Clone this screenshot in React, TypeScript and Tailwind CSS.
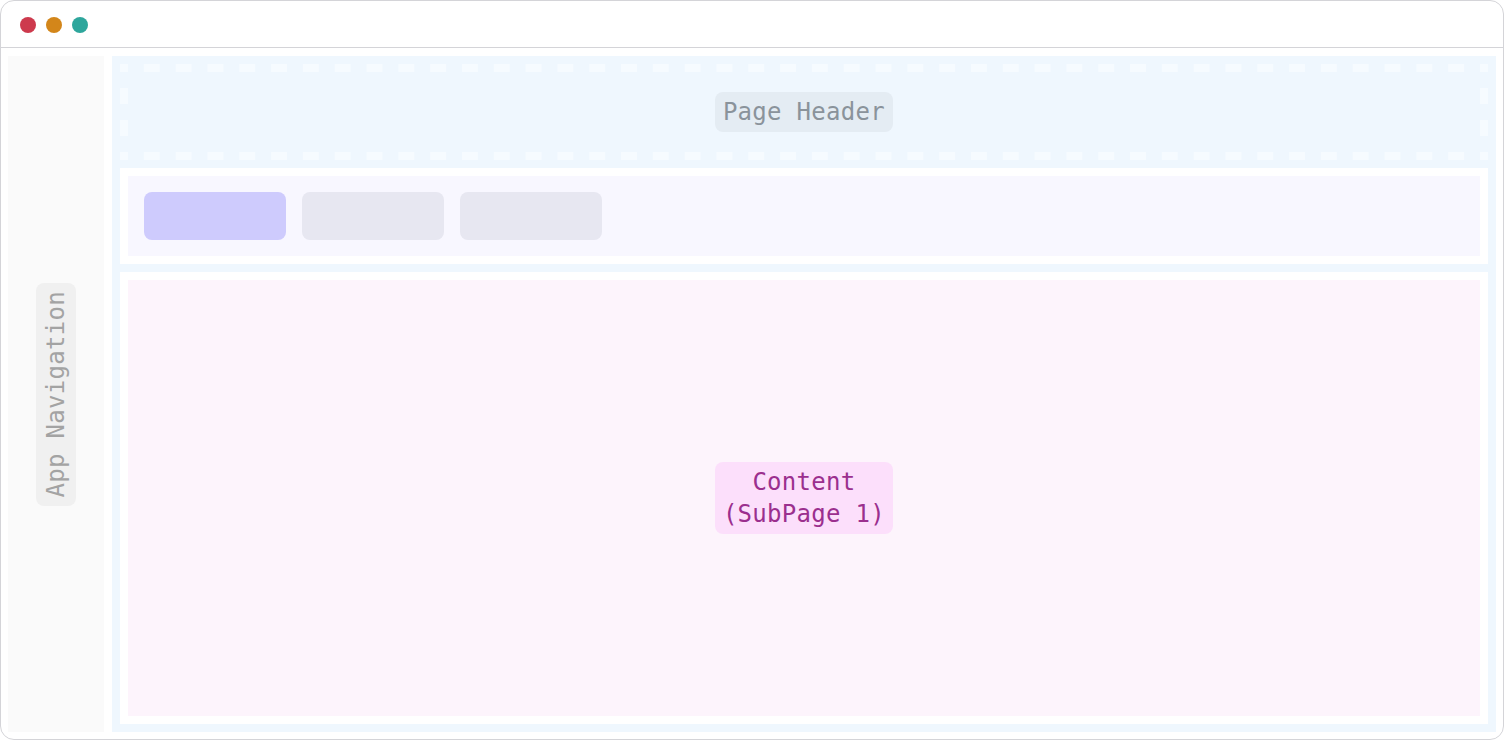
import React from "react";

const mono = { fontFamily: '"DejaVu Sans Mono", "Liberation Mono", monospace' };

export default function App() {
  return (
    <div className="w-[1504px] h-[740px] bg-white border border-[#d4d4d8] rounded-[14px] overflow-hidden flex flex-col">
      <div className="h-[47px] shrink-0 border-b border-[#d4d4d8] flex items-center gap-[10px] pl-[19px] pt-[1px]">
        <div className="w-4 h-4 rounded-full bg-[#cd3a4d]" />
        <div className="w-4 h-4 rounded-full bg-[#d3861a]" />
        <div className="w-4 h-4 rounded-full bg-[#2ea69c]" />
      </div>
      <div className="flex-1 min-h-0 flex gap-2 pt-2 pb-[7px] px-[7px]">
        <div className="w-[96px] shrink-0 bg-[#fafafa] flex items-center justify-center">
          <div className="w-10 h-[223px] bg-[#f0f0f0] rounded-lg flex items-center justify-center">
            <div
              className="[writing-mode:vertical-rl] rotate-180 text-[#a3a3a3] text-[24px] leading-[32px] tracking-[0.3px]"
              style={mono}
            >
              App Navigation
            </div>
          </div>
        </div>
        <div className="flex-1 bg-[#eff7fe] p-2 flex flex-col gap-2">
          <div className="h-[96px] shrink-0 p-2 flex items-center justify-center [background:linear-gradient(90deg,#f6fbff_8px,transparent_8px,transparent_24px,#f6fbff_24px)_left_top/32px_8px_round_no-repeat,linear-gradient(90deg,#f6fbff_8px,transparent_8px,transparent_24px,#f6fbff_24px)_left_bottom/32px_8px_round_no-repeat,linear-gradient(180deg,#f6fbff_8px,transparent_8px,transparent_24px,#f6fbff_24px)_left_top/8px_32px_no-repeat_round,linear-gradient(180deg,#f6fbff_8px,transparent_8px,transparent_24px,#f6fbff_24px)_right_top/8px_32px_no-repeat_round]">
            <div
              className="bg-[#e4ecf3] text-[#8a939b] text-[24px] leading-[32px] tracking-[0.3px] px-2 py-1 rounded-lg"
              style={mono}
            >
              Page Header
            </div>
          </div>
          <div className="h-[96px] shrink-0 bg-white p-2">
            <div className="h-full bg-[#f8f7ff] p-4 flex gap-4">
              <div className="w-[142px] h-12 rounded-lg bg-[#cecbfd]" />
              <div className="w-[142px] h-12 rounded-lg bg-[#e7e7f1]" />
              <div className="w-[142px] h-12 rounded-lg bg-[#e7e7f1]" />
            </div>
          </div>
          <div className="flex-1 min-h-0 bg-white p-2">
            <div className="h-full bg-[#fdf4fc] flex items-center justify-center">
              <div
                className="bg-[#fcdffb] text-[#9b2f8e] text-[24px] leading-[32px] tracking-[0.3px] px-2 py-1 rounded-lg text-center"
                style={mono}
              >
                Content
                <br />
                (SubPage 1)
              </div>
            </div>
          </div>
        </div>
      </div>
    </div>
  );
}
